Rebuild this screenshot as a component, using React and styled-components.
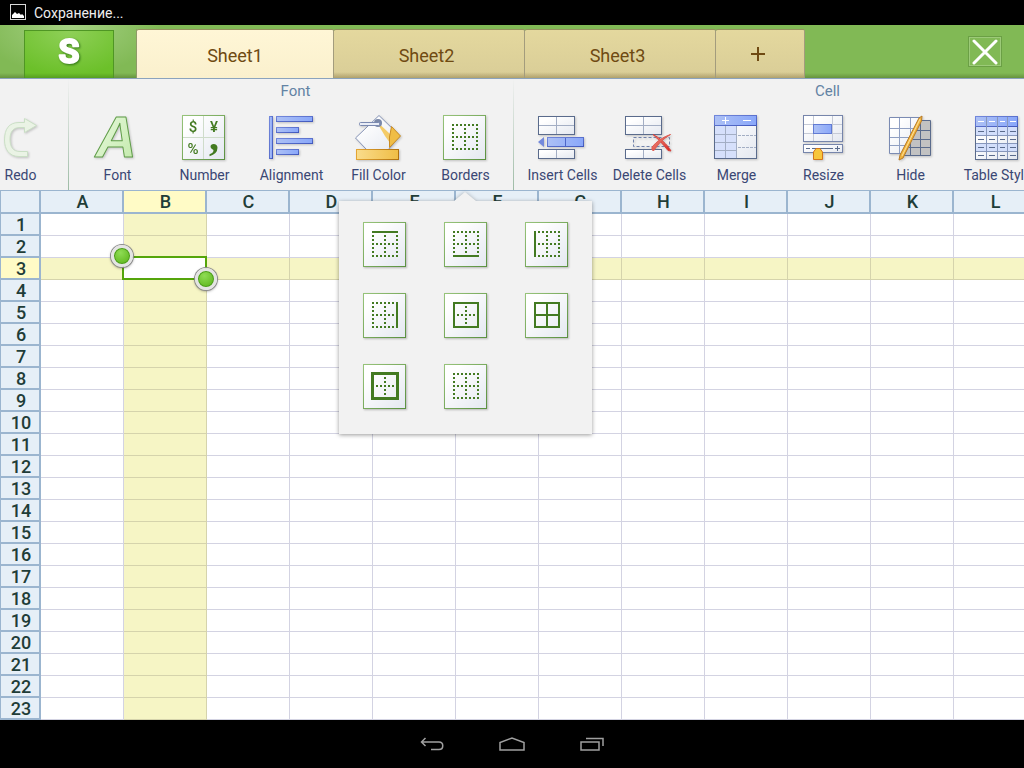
import React from 'react'
import { useState } from 'react'
import styled, { createGlobalStyle } from 'styled-components'

const columns = ['A', 'B', 'C', 'D', 'E', 'F', 'G', 'H', 'I', 'J', 'K', 'L']
const rows = Array.from({ length: 23 }, (_, i) => i + 1)
const sheets = ['Sheet1', 'Sheet2', 'Sheet3']
const borderKinds = [
  { kind: 'top', label: 'Top border' },
  { kind: 'bottom', label: 'Bottom border' },
  { kind: 'left', label: 'Left border' },
  { kind: 'right', label: 'Right border' },
  { kind: 'outer', label: 'Outside borders' },
  { kind: 'all', label: 'All borders' },
  { kind: 'thick', label: 'Thick box border' },
  { kind: 'none', label: 'No border' },
]

const line = '#5a6b8c'
const thin = '#a3aec4'

function Gradients() {
  return (
    <HiddenSvg width="0" height="0" aria-hidden="true">
      <defs>
        <linearGradient id="paper" x1="0" y1="0" x2="1" y2="1">
          <stop offset="0.2" stopColor="#ffffff" />
          <stop offset="1" stopColor="#e4e8f0" />
        </linearGradient>
        <linearGradient id="blue" x1="0" y1="0" x2="1" y2="0">
          <stop offset="0" stopColor="#adc1f5" />
          <stop offset="1" stopColor="#89a7fa" />
        </linearGradient>
        <linearGradient id="blueEdge" x1="0" y1="0" x2="1" y2="1">
          <stop offset="0" stopColor="#7388dc" />
          <stop offset="1" stopColor="#4259bd" />
        </linearGradient>
        <linearGradient id="greenEdge" x1="0" y1="0" x2="1" y2="1">
          <stop offset="0" stopColor="#98c47b" />
          <stop offset="1" stopColor="#5b9140" />
        </linearGradient>
        <linearGradient id="leaf" x1="0" y1="0" x2="1" y2="1">
          <stop offset="0" stopColor="#edfbe4" />
          <stop offset="1" stopColor="#bfe8a6" />
        </linearGradient>
        <linearGradient id="gold" x1="0" y1="0" x2="1" y2="0">
          <stop offset="0" stopColor="#f9dc8c" />
          <stop offset="1" stopColor="#f0bd45" />
        </linearGradient>
        <linearGradient id="goldEdge" x1="0" y1="0" x2="1" y2="0">
          <stop offset="0" stopColor="#e3a432" />
          <stop offset="1" stopColor="#b0710f" />
        </linearGradient>
        <linearGradient id="red" x1="0" y1="0" x2="1" y2="1">
          <stop offset="0" stopColor="#f3a08f" />
          <stop offset="1" stopColor="#d5201c" />
        </linearGradient>
      </defs>
    </HiddenSvg>
  )
}

// 43x45 tile with a 26px border preview in it
function BorderTile({ kind, x = 0, y = 0 }) {
  const framed = kind === 'outer' || kind === 'all' || kind === 'thick'
  const inner = kind === 'thick' || kind === 'outer'
  return (
    <g transform={`translate(${x} ${y})`} shapeRendering="crispEdges">
      <rect x="0.5" y="0.5" width="42" height="44" fill="url(#paper)" stroke="url(#greenEdge)" />
      <g stroke="#437a22" strokeWidth="2" fill="none" strokeDasharray="2 2">
        {!framed && (
          <>
            {kind !== 'top' && <path d="M9 10H35" />}
            {kind !== 'bottom' && <path d="M9 34H35" />}
            {kind !== 'left' && <path d="M10 9V35" />}
            {kind !== 'right' && <path d="M34 9V35" />}
            <path d="M9 22H35M22 9V35" />
          </>
        )}
        {inner && <path d="M13 22H32M22 13V32" />}
      </g>
      <g stroke="#437a22" strokeWidth="2" fill="none">
        {kind === 'top' && <path d="M9 10H35" />}
        {kind === 'bottom' && <path d="M9 34H35" />}
        {kind === 'left' && <path d="M10 9V35" />}
        {kind === 'right' && <path d="M34 9V35" />}
        {(kind === 'outer' || kind === 'all') && <rect x="10" y="10" width="24" height="24" />}
        {kind === 'all' && <path d="M10 22H34M22 10V34" />}
        {kind === 'thick' && <rect x="9.5" y="9.5" width="25" height="25" strokeWidth="3" />}
      </g>
    </g>
  )
}

function RowsTable() {
  return (
    <>
      <rect x="1.5" y="4.5" width="36" height="18" fill="url(#paper)" stroke={line} />
      <path d="M19.5 5V22M2 13.5H37" stroke={thin} />
      <rect x="1.5" y="37.5" width="36" height="9" fill="url(#paper)" stroke={line} />
      <path d="M19.5 38V46" stroke={thin} />
    </>
  )
}

const icons = {
  redo: (
    <path
      d="M29.5 6.5L41.5 13.5L29.5 20.5V15.5H25C18 15.5 15 20 15 27C15 35 18 39.5 25 39.5H32.5V44.5H24C14 44.5 9.5 37 9.5 28C9.5 17 14 10.5 24 10.5H29.5Z"
      fill="#eaf3e5" stroke="#cadfc5"
    />
  ),
  font: (
    <text x="24" y="45" textAnchor="middle" fontFamily="Liberation Sans" fontWeight="700" fontStyle="italic"
      fontSize="57" fill="url(#leaf)" stroke="#5f9c48" strokeWidth="1" strokeLinejoin="round">A</text>
  ),
  number: (
    <>
      <rect x="3.5" y="3.5" width="42" height="44" fill="url(#paper)" stroke="url(#greenEdge)" />
      <path d="M24.5 4V47M4 25.5H45" stroke="#cfdccb" />
      <g fill="#437a22" fontFamily="Roboto" fontSize="15" fontWeight="500" textAnchor="middle">
        <text x="14" y="20">$</text>
        <text x="35" y="20">¥</text>
        <text x="14" y="42">%</text>
        <text x="35" y="38" fontFamily="Liberation Serif" fontWeight="700" fontSize="40">,</text>
      </g>
    </>
  ),
  alignment: (
    <g fill="url(#blue)" stroke="url(#blueEdge)" shapeRendering="crispEdges">
      <rect x="3.5" y="4.5" width="3" height="42" />
      <rect x="10.5" y="4.5" width="36" height="5" />
      <rect x="10.5" y="15.5" width="22" height="5" />
      <rect x="10.5" y="26.5" width="36" height="5" />
      <rect x="10.5" y="37.5" width="22" height="5" />
    </g>
  ),
  fill: (
    <>
      <path d="M26 3.5L47 24L35 38H14L2.5 26Z" fill="url(#paper)" stroke="#8391b5" />
      <path d="M26.5 12L37 22V31L32 24L26 14Z" fill="#f4cb68" />
      <path d="M38.5 14.5L47.5 24L36.5 35.5V25Z" fill="#f0bd45" stroke="#c98c24" />
      <circle cx="25" cy="11" r="4" fill="#7a88a8" />
      <rect x="6.5" y="10.5" width="20" height="3" rx="1" fill="#e9edf6" stroke="#7a89b0" />
      <rect x="3.5" y="37.5" width="42" height="10" fill="url(#gold)" stroke="url(#goldEdge)" />
    </>
  ),
  borders: <BorderTile kind="none" x={3} y={3} />,
  insert: (
    <>
      <RowsTable />
      <path d="M1 30L7 25V35Z" fill="#7389dc" />
      <rect x="10.5" y="25.5" width="36" height="9" fill="url(#blue)" stroke="url(#blueEdge)" />
      <path d="M28.5 26V34" stroke="#4d66c8" />
    </>
  ),
  remove: (
    <>
      <RowsTable />
      <rect x="9.5" y="25.5" width="36" height="9" fill="none" stroke="#6f81ab" strokeDasharray="3 2" />
      <path d="M29 22.5C36 26 43 32 47 39L44 38.5C39 32 34 27 29 22.5Z" fill="url(#red)" stroke="#d8403a" />
      <path d="M46.5 22.5C39 27 34 32 30 38.5L28 38V35C33 29 39 25 46.5 22.5Z" fill="url(#red)" stroke="#dd5a50" />
    </>
  ),
  merge: (
    <g shapeRendering="crispEdges">
      <rect x="3.5" y="3.5" width="42" height="43" fill="url(#paper)" stroke={line} />
      <rect x="4" y="14" width="22" height="32" fill="#d6e0fb" />
      <path d="M14.5 14V46M25.5 14V46M4 22.5H25M4 30.5H25M4 38.5H25" stroke={thin} />
      <path d="M27 23.5H45M27 35.5H45" stroke={thin} strokeDasharray="3 1" />
      <rect x="3.5" y="3.5" width="42" height="10" fill="url(#blue)" stroke="url(#blueEdge)" />
      <path d="M11 8.5H18M14.5 5V12M32 8.5H40" stroke="#ffffff" />
    </g>
  ),
  resize: (
    <>
      <rect x="5.5" y="3.5" width="39" height="26" fill="url(#paper)" stroke="#7685ab" />
      <path d="M15.5 4V29M34.5 4V29M6 12.5H44M6 21.5H44" stroke="#c5cad6" />
      <rect x="15.5" y="12.5" width="18" height="9" fill="url(#blue)" stroke="#617bd4" />
      <rect x="5.5" y="32.5" width="39" height="8" fill="url(#paper)" stroke="#7685ab" />
      <path d="M8 36.5H12M14 36.5H35M37 36.5H42M39.5 34V39" stroke={line} />
      <path d="M15.5 40L18 36.5H22L24.5 40V47.5H15.5Z" fill="#f7c63c" stroke="#d3761b" />
    </>
  ),
  hide: (
    <>
      <path d="M4.5 5.5H35L20 41.5H4.5Z" fill="url(#paper)" stroke="#7b8bb3" />
      <path d="M14.5 6V41M25.5 6V30M5 16.5H31M5 25.5H27M5 33.5H24" stroke="#8f9fc2" />
      <path d="M35 8.5H45.5V43.5H19Z" fill="#c2c2c2" stroke={line} />
      <path d="M35.5 9V43M25.5 31V43M32 18.5H45M28 27.5H45M24 35.5H45" stroke={line} />
      <path d="M34 6L37 4L36.5 9L18 46L14 48L15 43Z" fill="#f2b53c" stroke="#b87a25" />
      <path d="M35 7L17 44" stroke="#fbe09a" />
    </>
  ),
  table: (
    <g shapeRendering="crispEdges">
      <rect x="3.5" y="4.5" width="42" height="43" fill="url(#paper)" stroke={line} />
      <path d="M4 15H45V23H4ZM4 31H45V39H4Z" fill="#d2defb" />
      <rect x="3.5" y="4.5" width="42" height="10" fill="url(#blue)" stroke="url(#blueEdge)" />
      <path d="M14.5 5V47M25.5 5V47M35.5 5V47M4 23.5H45M4 31.5H45M4 39.5H45" stroke="#8797bb" />
      <path d="M6 9.5H12M17 9.5H23M28 9.5H33M38 9.5H44" stroke="#ffffff" />
      <path d="M6 19.5H12M17 19.5H23M28 19.5H33M38 19.5H44M6 27.5H12M17 27.5H23M28 27.5H33M38 27.5H44M6 35.5H12M17 35.5H23M28 35.5H33M38 35.5H44M6 43.5H12M17 43.5H23M28 43.5H33M38 43.5H44" stroke={line} />
    </g>
  ),
}

function Tool({ icon, label, children, ...rest }) {
  return (
    <ToolSlot>
      <ToolButton type="button" {...rest}>
        <ToolIcon viewBox="0 0 51 52" fill="none" aria-hidden="true">{icons[icon]}</ToolIcon>
        {label}
      </ToolButton>
      {children}
    </ToolSlot>
  )
}

function BordersMenu() {
  return (
    <Popover>
      {borderKinds.map((b) => (
        <BorderButton key={b.kind} type="button" aria-label={b.label}>
          <svg width="43" height="45" aria-hidden="true"><BorderTile kind={b.kind} /></svg>
        </BorderButton>
      ))}
    </Popover>
  )
}

function App() {
  const [active, setActive] = useState('Sheet1')
  const [menuOpen, setMenuOpen] = useState(true)
  const [selected, setSelected] = useState({ col: 'B', row: 3 })

  return (
    <Page>
      <GlobalStyle />
      <Gradients />
      <StatusBar>
        <svg width="16" height="17" fill="none" aria-hidden="true">
          <rect x="0.5" y="0.5" width="15" height="15" stroke="#d8d8d8" />
          <path d="M2 14V11L5 8L7 10L9 9L11 11L12 10L14 12V14Z" fill="#ffffff" />
        </svg>
        Сохранение...
      </StatusBar>
      <Header>
        <Logo type="button" aria-label="Menu">
          <svg width="40" height="46" aria-hidden="true">
            <text x="20" y="32" textAnchor="middle" fontFamily="Roboto" fontWeight="700" fontSize="34"
              fill="#ffffff" stroke="#ffffff" strokeWidth="2" strokeLinejoin="round">S</text>
          </svg>
        </Logo>
        <Tabs>
          {sheets.map((name) => (
            <Tab key={name} type="button" $active={name === active} onClick={() => setActive(name)}>{name}</Tab>
          ))}
          <AddTab type="button" aria-label="Add sheet">
            <svg width="16" height="16" aria-hidden="true">
              <path d="M1 8H15M8 1V15" stroke="#6f4a12" strokeWidth="2" />
            </svg>
          </AddTab>
        </Tabs>
        <Close type="button" aria-label="Close">
          <svg width="26" height="26" aria-hidden="true">
            <path d="M2 2L24 24M24 2L2 24" stroke="#ffffff" strokeWidth="3" strokeLinecap="round" />
          </svg>
        </Close>
      </Header>
      <Toolbar>
        <FirstGroup>
          <Tool icon="redo" label="Redo" />
        </FirstGroup>
        <Group $slots={5}>
          <GroupTitle>Font</GroupTitle>
          <Tools>
            <Tool icon="font" label="Font" />
            <Tool icon="number" label="Number" />
            <Tool icon="alignment" label="Alignment" />
            <Tool icon="fill" label="Fill Color" />
            <Tool icon="borders" label="Borders" aria-expanded={menuOpen} onClick={() => setMenuOpen(!menuOpen)}>
              {menuOpen && <BordersMenu />}
            </Tool>
          </Tools>
        </Group>
        <Group $slots={7}>
          <GroupTitle>Cell</GroupTitle>
          <Tools>
            <Tool icon="insert" label="Insert Cells" />
            <Tool icon="remove" label="Delete Cells" />
            <Tool icon="merge" label="Merge" />
            <Tool icon="resize" label="Resize" />
            <Tool icon="hide" label="Hide" />
            <Tool icon="table" label="Table Style" />
          </Tools>
        </Group>
      </Toolbar>
      <SheetArea>
        <Sheet>
          <colgroup>
            <RowCol />
            {columns.map((c) => <DataCol key={c} />)}
          </colgroup>
          <thead>
            <tr>
              <Corner />
              {columns.map((c) => <ColHead key={c} scope="col" $on={c === selected.col}>{c}</ColHead>)}
            </tr>
          </thead>
          <tbody>
            {rows.map((r) => (
              <tr key={r}>
                <RowHead scope="row" $on={r === selected.row}>{r}</RowHead>
                {columns.map((c) => {
                  const here = c === selected.col && r === selected.row
                  return (
                    <Cell
                      key={c}
                      $here={here}
                      $on={!here && (c === selected.col || r === selected.row)}
                      onClick={() => setSelected({ col: c, row: r })}
                    >
                      {here && <Selection><Knob $start /><Knob /></Selection>}
                    </Cell>
                  )
                })}
              </tr>
            ))}
          </tbody>
        </Sheet>
      </SheetArea>
      <NavBar>
        <NavButton type="button" aria-label="Back">
          <svg width="24" height="14" fill="none" stroke="#a0a0a0" strokeWidth="1.5" aria-hidden="true">
            <path d="M5.5 1L1.5 5L5.5 9M2 5H19C24 5 24 12.5 19 12.5H11" />
          </svg>
        </NavButton>
        <NavButton type="button" aria-label="Home">
          <svg width="26" height="14" fill="none" stroke="#a0a0a0" strokeWidth="1.5" aria-hidden="true">
            <path d="M1 13V5.5L13 1L25 5.5V13Z" />
          </svg>
        </NavButton>
        <NavButton type="button" aria-label="Recent apps">
          <svg width="24" height="14" fill="none" stroke="#a0a0a0" strokeWidth="1.5" aria-hidden="true">
            <rect x="1" y="5" width="18" height="8" />
            <path d="M6 1.5H23V9" />
          </svg>
        </NavButton>
      </NavBar>
    </Page>
  )
}

const GlobalStyle = createGlobalStyle`
  * {
    box-sizing: border-box;
  }
  body {
    margin: 0;
    font-family: Roboto, "Liberation Sans", sans-serif;
  }
  button {
    margin: 0;
    padding: 0;
    border: 0;
    background: none;
    font-family: inherit;
    cursor: pointer;
  }
  svg {
    display: block;
  }
`;
const HiddenSvg = styled.svg`
  position: absolute;
`;
const Page = styled.div`
  display: flex;
  flex-direction: column;
  height: 100vh;
  overflow: hidden;
  background: #ffffff;
`;
const StatusBar = styled.div`
  display: flex;
  align-items: center;
  gap: 8px;
  flex: none;
  height: 25px;
  padding-left: 10px;
  background: #000000;
  color: #eeeeee;
  font-size: 14px;
`;
const Header = styled.header`
  display: flex;
  align-items: flex-end;
  flex: none;
  height: 54px;
  padding: 0 22px 0 24px;
  border-bottom: 1px solid #8ba3bd;
  background:
    linear-gradient(transparent 48px, rgba(40, 60, 10, 0.3)),
    radial-gradient(ellipse 90px 50px at 70px 0, #a5d183, rgba(129, 185, 85, 0)),
    #81b955;
`;
const Logo = styled.button`
  display: flex;
  justify-content: center;
  width: 90px;
  height: 48px;
  margin-right: 22px;
  border: 1px solid #4f9624;
  border-bottom: 0;
  background:
    linear-gradient(transparent 42px, rgba(20, 60, 0, 0.25)),
    radial-gradient(ellipse 70px 44px at 50% 0, #8fd058, #6cc02a);
  svg {
    filter: drop-shadow(1px 1px 1px rgba(0, 60, 0, 0.6));
  }
`;
const Tabs = styled.nav`
  display: flex;
  height: 49px;
  border-left: 1px solid #8f9a68;
`;
const Tab = styled.button`
  width: ${(p) => (p.$active ? '197px' : '191px')};
  padding: 2px ${(p) => (p.$active ? '0' : '5px')} 0 0;
  border-top: 1px solid #96925f;
  border-right: 1px solid #a39c7d;
  border-radius: 2px 2px 0 0;
  background: ${(p) => (p.$active
    ? 'linear-gradient(#fff6d6, #faf0cd)'
    : 'linear-gradient(transparent 42px, rgba(80, 60, 10, 0.3)), linear-gradient(#e4d89e, #d9cd97)')};
  color: #6f4a12;
  font-size: 18px;
`;
const AddTab = styled(Tab)`
  display: flex;
  align-items: center;
  justify-content: center;
  width: 89px;
  padding-top: 0;
`;
const Close = styled.button`
  display: flex;
  align-items: center;
  justify-content: center;
  width: 34px;
  height: 31px;
  margin: 0 0 11px auto;
  border: 1px solid #6b9f45;
  box-shadow: inset 0 0 0 1px #9cca78;
`;
const Toolbar = styled.div`
  display: flex;
  flex: none;
  position: relative;
  z-index: 2;
  height: 111px;
  background: #f2f2f2;
`;
const Group = styled.section`
  flex: none;
  width: ${(p) => p.$slots * 87 + 10}px;
  padding: 0 4px 0 5px;
  border-left: 1px solid;
  border-image: linear-gradient(#f2f2f2, #9dbba5) 1;
`;
const FirstGroup = styled.section`
  display: flex;
  justify-content: flex-end;
  flex: none;
  width: 68px;
  padding: 33px 4px 0 0;
`;
const GroupTitle = styled.h2`
  margin: 0;
  padding-left: 8px;
  color: #6383a4;
  font-size: 15px;
  font-weight: 400;
  line-height: 24px;
  text-align: center;
`;
const Tools = styled.div`
  display: flex;
  padding-top: 9px;
`;
const ToolSlot = styled.div`
  position: relative;
  flex: none;
  width: 87px;
`;
const ToolButton = styled.button`
  display: flex;
  flex-direction: column;
  align-items: center;
  gap: 3px;
  width: 100%;
  color: #3a4774;
  font-size: 14px;
  line-height: 16px;
  white-space: nowrap;
`;
const ToolIcon = styled.svg`
  width: 51px;
  height: 52px;
  overflow: visible;
  filter: drop-shadow(1px 1px 1px rgba(0, 0, 0, 0.2));
`;
const Popover = styled.div`
  position: absolute;
  top: 89px;
  left: -83px;
  display: grid;
  grid-template-columns: repeat(3, 43px);
  gap: 26px 38px;
  padding: 21px 24px 25px;
  width: 253px;
  height: 233px;
  background: #f2f2f2;
  filter: drop-shadow(0 1px 2px rgba(0, 0, 0, 0.4));
  &::before {
    content: "";
    position: absolute;
    bottom: 100%;
    left: 115px;
    border: 11px solid transparent;
    border-top: 0;
    border-bottom: 9px solid #f2f2f2;
  }
`;
const BorderButton = styled.button`
  width: 43px;
  height: 45px;
  box-shadow: 1px 1px 2px rgba(0, 0, 0, 0.25);
`;
const SheetArea = styled.main`
  flex: 1;
  min-height: 0;
  overflow: hidden;
`;
const Sheet = styled.table`
  width: 1037px;
  table-layout: fixed;
  border-collapse: separate;
  border-spacing: 0;
`;
const RowCol = styled.col`
  width: 41px;
`;
const DataCol = styled.col`
  width: 83px;
`;
const HeadCell = styled.th`
  padding: 0 0 0 2px;
  border: 0 solid #9bb5cf;
  border-width: 0 2px 2px 0;
  background: ${(p) => (p.$on ? '#fffbc6' : '#e6eff7')};
  color: #1f3d38;
  font-size: 18px;
  font-weight: 500;
  line-height: 20px;
`;
const ColHead = styled(HeadCell)`
  height: 24px;
  border-top-width: 1px;
`;
const RowHead = styled(HeadCell)`
  height: 22px;
  padding-top: 2px;
  border-left-width: 1px;
  line-height: 18px;
`;
const Corner = styled(ColHead).attrs({ as: 'td' })`
  border-left-width: 1px;
`;
const Cell = styled.td`
  position: ${(p) => (p.$here ? 'relative' : 'static')};
  padding: 0;
  border: 0 solid ${(p) => (p.$on ? '#d5d3ac' : '#d3d3e2')};
  border-width: 0 1px 1px 0;
  background: ${(p) => (p.$on ? '#f6f5c5' : '#ffffff')};
`;
const Selection = styled.div`
  position: absolute;
  z-index: 1;
  inset: -2px -1px -1px -2px;
  border: 2px solid #55a50b;
`;
const Knob = styled.span`
  position: absolute;
  width: 22px;
  height: 22px;
  border: 3px solid #e4e4e4;
  border-radius: 50%;
  background: radial-gradient(circle at 40% 30%, #8fdc55, #55b012);
  box-shadow: 0 0 0 1px #8c8c8c, inset 0 0 0 1px #4b9a1c, 0 1px 3px rgba(0, 0, 0, 0.5);
  ${(p) => (p.$start ? 'top: -13px; left: -13px;' : 'right: -12px; bottom: -12px;')}
`;
const NavBar = styled.footer`
  display: flex;
  justify-content: center;
  flex: none;
  height: 48px;
  background: #000000;
`;
const NavButton = styled.button`
  display: flex;
  align-items: center;
  justify-content: center;
  width: 80px;
`;

export default App
